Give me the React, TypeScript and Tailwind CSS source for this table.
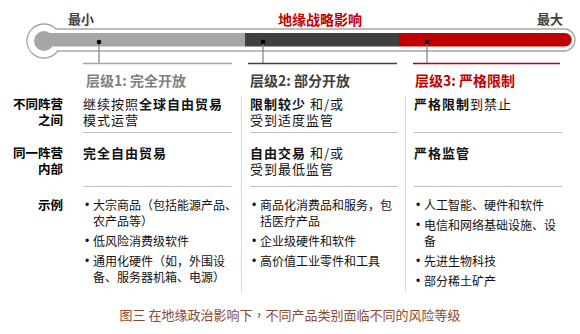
import React from "react";

const gridCols = "grid grid-cols-[83px_158px_164px_175px]";

const bullets: string[][][] = [
  [["大宗商品（包括能源产品、", "农产品等）"], ["低风险消费级软件"], ["通用化硬件（如，外围设", "备、服务器机箱、电源）"]],
  [["商品化消费品和服务，包", "括医疗产品"], ["企业级硬件和软件"], ["高价值工业零件和工具"]],
  [["人工智能、硬件和软件"], ["电信和网络基础设施、设", "备"], ["先进生物科技"], ["部分稀土矿产"]],
];

const Thermometer = () => (
  <svg width="580" height="68" viewBox="0 0 580 68" className="absolute inset-0">
    {/* outer tube */}
    <path
      d="M56 29 H564 A11 11 0 0 1 564 51 H57.7 A17 17 0 1 1 56 29 Z"
      fill="#fff"
      stroke="#a6a6a6"
      strokeWidth="1.3"
    />
    {/* inner fill */}
    <circle cx="44" cy="41" r="10" fill="#a6a6a6" />
    <rect x="44" y="33" width="201" height="13.5" fill="#a6a6a6" />
    <rect x="245" y="33" width="154" height="13.5" fill="#404040" />
    <path d="M399 33 H565 A6.75 6.75 0 0 1 565 46.5 H399 Z" fill="#c00000" />
    {/* pointers */}
    {[99, 263, 427].map((x) => (
      <g key={x}>
        <line x1={x} y1="42" x2={x} y2="63" stroke="#7f7f7f" strokeWidth="1.2" />
        <circle cx={x} cy="42" r="2.3" fill="#000" />
      </g>
    ))}
    <line x1="83" y1="63.5" x2="232" y2="63.5" stroke="#a6a6a6" strokeWidth="1.6" />
    <line x1="248" y1="63.5" x2="397" y2="63.5" stroke="#404040" strokeWidth="1.6" />
    <line x1="413" y1="63.5" x2="560" y2="63.5" stroke="#c00000" strokeWidth="1.6" />
  </svg>
);

const Label = ({ lines, pt }: { lines: string[]; pt: string }) => (
  <div className={`${pt} pr-[20px] text-right text-[12.5px] font-bold leading-[16px] text-black`}>
    {lines.map((l) => (
      <div key={l}>{l}</div>
    ))}
  </div>
);

const BulletList = ({ items }: { items: string[][] }) => (
  <div className="flex flex-col gap-[4px] text-[12px] leading-[16px] text-[#111]">
    {items.map((lines, i) => (
      <div key={i} className="flex whitespace-nowrap">
        <span className="w-[10px] shrink-0 pl-[2px] font-['Liberation_Sans',sans-serif] text-[12px]">•</span>
        <span>
          {lines.map((l, j) => (
            <React.Fragment key={j}>
              {j > 0 && <br />}
              {l}
            </React.Fragment>
          ))}
        </span>
      </div>
    ))}
  </div>
);

export default function App() {
  return (
    <div className="w-[580px] h-[334px] overflow-hidden bg-white font-['Noto_Sans_CJK_SC',sans-serif]">
      {/* Scale */}
      <div className="relative h-[68px]">
        <Thermometer />
        <div className="relative flex items-center pt-[10px] leading-[18px]">
          <span className="ml-[68px] text-[13px] font-bold text-[#404040]">最小</span>
          <span className="ml-[184px] text-[14px] font-bold text-[#c00000]">地缘战略影响</span>
          <span className="ml-auto mr-[17px] text-[13px] font-bold text-[#404040]">最大</span>
        </div>
      </div>

      {/* Tier headers */}
      <div className={`${gridCols} mt-[2px] h-[20px] items-center text-[14px] font-bold leading-[20px]`}>
        <div />
        <div className="pl-[3px] text-[#808080]">层级1: 完全开放</div>
        <div className="pl-[9px] text-[#404040]">层级2: 部分开放</div>
        <div className="pl-[10px] text-[#c00000]">层级3: 严格限制</div>
      </div>

      <div className="mt-[6px]">
        {/* Row 1 */}
        <div className={gridCols}>
          <Label lines={["不同阵营", "之间"]} pt="pt-0" />
          <div className="flex flex-col">
            <div className="flex-1 w-[149px] border-b border-[#bfbfbf] pb-[4px] text-[13px] leading-[16px] tracking-[1px] text-[#111]">
              继续按照<b>全球自由贸易</b>
              <br />
              模式运营
            </div>
          </div>
          <div className="flex flex-col border-l border-[#d9d9d9] pl-2">
            <div className="flex-1 w-[148px] border-b border-[#bfbfbf] pb-[4px] text-[13px] leading-[16px] tracking-[1px] text-[#111]">
              <b>限制较少</b> 和/或
              <br />
              受到适度监管
            </div>
          </div>
          <div className="flex flex-col border-l border-[#d9d9d9] pl-2">
            <div className="flex-1 w-[148px] border-b border-[#bfbfbf] pb-[4px] text-[13px] leading-[16px] tracking-[1px] text-[#111]">
              <b>严格限制</b>到禁止
            </div>
          </div>
        </div>

        {/* Row 2 */}
        <div className={gridCols}>
          <Label lines={["同一阵营", "内部"]} pt="pt-[12px]" />
          <div className="flex flex-col pt-[12px]">
            <div className="flex-1 w-[149px] border-b border-[#bfbfbf] pb-[9px] text-[13px] leading-[16px] tracking-[1px] text-[#111]">
              <b>完全自由贸易</b>
            </div>
          </div>
          <div className="flex flex-col border-l border-[#d9d9d9] pl-2 pt-[12px]">
            <div className="flex-1 w-[148px] border-b border-[#bfbfbf] pb-[9px] text-[13px] leading-[16px] tracking-[1px] text-[#111]">
              <b>自由交易</b> 和/或
              <br />
              受到最低监管
            </div>
          </div>
          <div className="flex flex-col border-l border-[#d9d9d9] pl-2 pt-[12px]">
            <div className="flex-1 w-[148px] border-b border-[#bfbfbf] pb-[9px] text-[13px] leading-[16px] tracking-[1px] text-[#111]">
              <b>严格监管</b>
            </div>
          </div>
        </div>

        {/* Row 3 */}
        <div className={gridCols}>
          <Label lines={["示例"]} pt="pt-[10px]" />
          <div className="pt-[10px] pb-[3px]">
            <BulletList items={bullets[0]} />
          </div>
          <div className="border-l border-[#d9d9d9] pl-2 pt-[10px] pb-[3px]">
            <BulletList items={bullets[1]} />
          </div>
          <div className="border-l border-[#d9d9d9] pl-2 pt-[10px] pb-[3px]">
            <BulletList items={bullets[2]} />
          </div>
        </div>
      </div>

      {/* Caption */}
      <div className="mt-[14px] text-center text-[13px] leading-[18px] text-[#8a4b2e]">
        图三 在地缘政治影响下
        <span className="font-['Noto_Sans_CJK_TC',sans-serif]">，</span>
        不同产品类别面临不同的风险等级
      </div>
    </div>
  );
}
